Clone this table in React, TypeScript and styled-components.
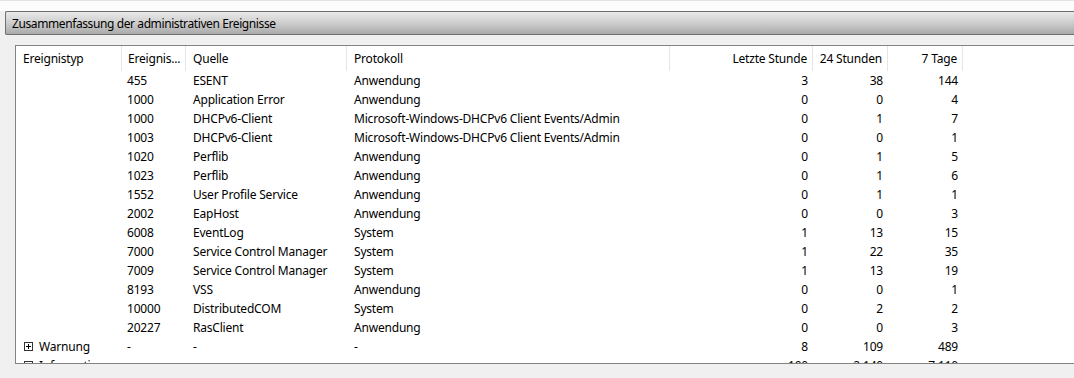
import styled, { createGlobalStyle } from 'styled-components';

const GlobalStyle = createGlobalStyle`
    html, body {
        margin: 0;
        padding: 0;
        background: #f0f0f0;
    }
    body {
        font-family: "Noto Sans", "Open Sans", sans-serif;
        font-size: 12px;
        color: #000;
    }
`;

const Page = styled.div`
    width: 1074px;
    height: 378px;
    overflow: hidden;
    display: flex;
    flex-direction: column;
    background: #f0f0f0;
`;

const TopStrip = styled.div`
    height: 10px;
    background: #fcfcfc;
    border-top: 1px solid #e4e4e4;
`;

const SectionHeader = styled.div`
    margin-left: 5px;
    height: 22px;
    display: flex;
    align-items: center;
    padding-left: 6px;
    border: 1px solid #6f6f6f;
    border-right: none;
    border-radius: 2px 0 0 2px;
    background: linear-gradient(to bottom, #e9e9e9 0%, #d0d0d0 45%, #aaaaaa 100%);
    white-space: nowrap;
    letter-spacing: -0.4px;
`;

const Body = styled.div`
    flex: 1;
    padding: 10px 0 0 15px;
    display: flex;
    flex-direction: column;
`;

const ListPanel = styled.div`
    height: 317px;
    background: #fff;
    border: 1px solid #838383;
    border-right: none;
    overflow: hidden;
    letter-spacing: -0.2px;
`;

const columns = '106px 64px 161px 323px 143px 75px 75px';

const HeaderRow = styled.div`
    display: grid;
    grid-template-columns: ${columns};
    height: 25px;
`;

const HeaderCell = styled.div<{ $right?: boolean; $pad?: number }>`
    display: flex;
    align-items: center;
    justify-content: ${p => p.$right ? 'flex-end' : 'flex-start'};
    padding: ${p => p.$right ? '0 5px 0 0' : `0 0 0 ${p.$pad ?? 7}px`};
    border-right: 1px solid #e5e5e5;
    white-space: nowrap;
    overflow: hidden;
`;

const Row = styled.div`
    display: grid;
    grid-template-columns: ${columns};
    height: 19px;
`;

const Cell = styled.div<{ $right?: boolean; $pad?: number }>`
    display: flex;
    align-items: center;
    justify-content: ${p => p.$right ? 'flex-end' : 'flex-start'};
    padding: ${p => p.$right ? '0 5px 0 0' : `0 0 0 ${p.$pad ?? 7}px`};
    gap: 6px;
    white-space: nowrap;
    overflow: hidden;
`;

const ExpandBox = styled.span`
    position: relative;
    width: 9px;
    height: 9px;
    box-sizing: border-box;
    border: 1px solid #333;
    flex-shrink: 0;
    &::before {
        content: '';
        position: absolute;
        left: 1px;
        top: 3px;
        width: 5px;
        height: 1px;
        background: #000;
    }
    &::after {
        content: '';
        position: absolute;
        left: 3px;
        top: 1px;
        width: 1px;
        height: 5px;
        background: #000;
    }
`;

interface EventRow {
    type?: string;
    id: string;
    source: string;
    log: string;
    hour: string;
    day: string;
    week: string;
}

const rows: EventRow[] = [
    { id: '455', source: 'ESENT', log: 'Anwendung', hour: '3', day: '38', week: '144' },
    { id: '1000', source: 'Application Error', log: 'Anwendung', hour: '0', day: '0', week: '4' },
    { id: '1000', source: 'DHCPv6-Client', log: 'Microsoft-Windows-DHCPv6 Client Events/Admin', hour: '0', day: '1', week: '7' },
    { id: '1003', source: 'DHCPv6-Client', log: 'Microsoft-Windows-DHCPv6 Client Events/Admin', hour: '0', day: '0', week: '1' },
    { id: '1020', source: 'Perflib', log: 'Anwendung', hour: '0', day: '1', week: '5' },
    { id: '1023', source: 'Perflib', log: 'Anwendung', hour: '0', day: '1', week: '6' },
    { id: '1552', source: 'User Profile Service', log: 'Anwendung', hour: '0', day: '1', week: '1' },
    { id: '2002', source: 'EapHost', log: 'Anwendung', hour: '0', day: '0', week: '3' },
    { id: '6008', source: 'EventLog', log: 'System', hour: '1', day: '13', week: '15' },
    { id: '7000', source: 'Service Control Manager', log: 'System', hour: '1', day: '22', week: '35' },
    { id: '7009', source: 'Service Control Manager', log: 'System', hour: '1', day: '13', week: '19' },
    { id: '8193', source: 'VSS', log: 'Anwendung', hour: '0', day: '0', week: '1' },
    { id: '10000', source: 'DistributedCOM', log: 'System', hour: '0', day: '2', week: '2' },
    { id: '20227', source: 'RasClient', log: 'Anwendung', hour: '0', day: '0', week: '3' },
    { type: 'Warnung', id: '-', source: '-', log: '-', hour: '8', day: '109', week: '489' },
    { type: 'Information', id: '-', source: '-', log: '-', hour: '100', day: '2.140', week: '7.110' },
];

export default function App() {
    return (
        <>
            <GlobalStyle />
            <Page>
                <TopStrip />
                <SectionHeader>Zusammenfassung der administrativen Ereignisse</SectionHeader>
                <Body>
                    <ListPanel>
                        <HeaderRow>
                            <HeaderCell>Ereignistyp</HeaderCell>
                            <HeaderCell $pad={6}>Ereignis...</HeaderCell>
                            <HeaderCell>Quelle</HeaderCell>
                            <HeaderCell>Protokoll</HeaderCell>
                            <HeaderCell $right>Letzte Stunde</HeaderCell>
                            <HeaderCell $right>24 Stunden</HeaderCell>
                            <HeaderCell $right>7 Tage</HeaderCell>
                        </HeaderRow>
                        {rows.map((r, i) => (
                            <Row key={i}>
                                <Cell $pad={8}>
                                    {r.type && <ExpandBox />}
                                    {r.type}
                                </Cell>
                                <Cell $pad={5}>{r.id}</Cell>
                                <Cell>{r.source}</Cell>
                                <Cell>{r.log}</Cell>
                                <Cell $right>{r.hour}</Cell>
                                <Cell $right>{r.day}</Cell>
                                <Cell $right>{r.week}</Cell>
                            </Row>
                        ))}
                    </ListPanel>
                </Body>
            </Page>
        </>
    );
}
